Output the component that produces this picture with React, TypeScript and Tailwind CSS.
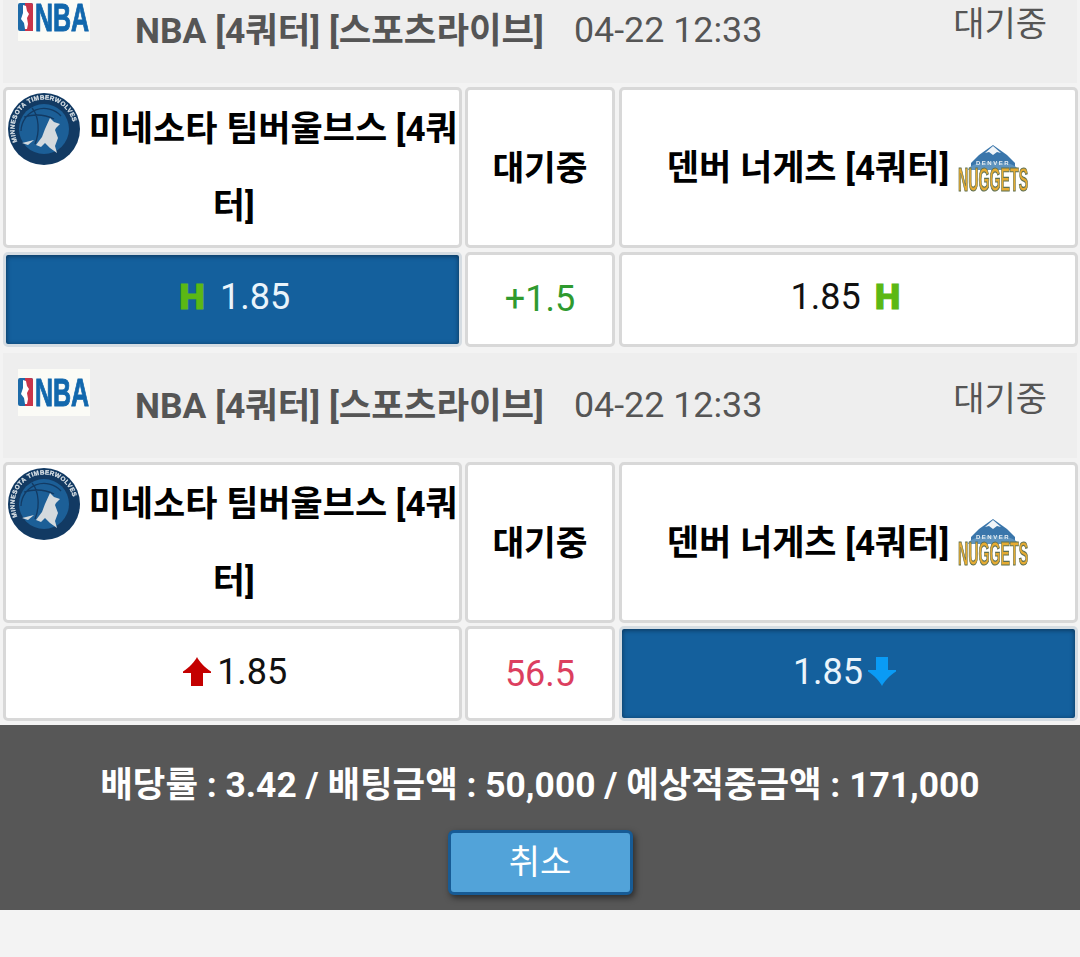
import React from 'react';

const FONT = "font-['Roboto','Noto_Sans_CJK_KR',sans-serif]";

function NbaLogo() {
  return (
    <svg width="72" height="47" viewBox="0 0 72 47" className="block blur-[0.5px]">
      <rect width="72" height="47" fill="#fbfbf6" />
      <rect x="0" y="9" width="15" height="28" rx="2" fill="#1d6aa8" />
      <path d="M7 9h6a2 2 0 0 1 2 2v26H7z" fill="#c9354a" />
      <path d="M5 11l3 1 1 5 2 3-2 4 1 6-1 5H7l-1-6-3-4 2-6z" fill="#fff" />
      <text transform="translate(17 37) scale(0.64 1)" fontFamily="Liberation Sans" fontWeight="700" fontSize="39" fill="#1268ad" stroke="#1268ad" strokeWidth="1">NBA</text>
    </svg>
  );
}

function WolvesLogo() {
  return (
    <svg width="72" height="72" viewBox="0 0 72 72" className="float-left -ml-px mr-[8px] mt-[2px] blur-[0.5px]">
      <defs>
        <path id="ring" d="M9.300 48.500A29.500 29.500 0 1 1 62.700 48.500" />
      </defs>
      <circle cx="36" cy="36" r="36" fill="#123a63" />
      <circle cx="36" cy="36" r="25" fill="#1c5f97" />
      <path d="M13 38a23 23 0 0 1 40-15M24 15c7 8 8 24 3 36M16 24c10-3 20-3 30 2" fill="none" stroke="#123a63" strokeWidth="1.300" />
      <text fontFamily="Liberation Sans" fontWeight="700" fontSize="6.300" fill="#dfe6ea" stroke="#dfe6ea" strokeWidth="0.200" letterSpacing="0.4">
        <textPath href="#ring">MINNESOTA TIMBERWOLVES</textPath>
      </text>
      <path d="M42 25L46 29L52 31L48 35L47 37L50 45L47 53L49 60L42 55L37 50L33 54L28 52L34 44L37 36z" fill="#d4dade" />
      <path d="M14 50L26 47L20 52z" fill="#d4dade" />
    </svg>
  );
}

function NuggetsLogo() {
  return (
    <svg width="72" height="50" viewBox="0 0 72 50" className="inline-block align-[-22px] ml-[8px] blur-[0.5px]">
      <path d="M36 1l14 10 8 8v6H14v-6l8-8z" fill="#3a76ab" />
      <path d="M36 2l8 7-4-1-4 3-4-3-4 1z" fill="#f1f5f8" />
      <path d="M11 26c2-11 48-11 50 0z" fill="#5f94be" />
      <text x="36" y="21" textAnchor="middle" fontFamily="Liberation Sans" fontWeight="700" fontSize="6" letterSpacing="1.500" fill="#e8eef3">DENVER</text>
      <text transform="translate(1 47) scale(0.43 1)" fontFamily="Liberation Sans" fontWeight="700" fontSize="33" fill="#e6ab32" stroke="#5f7050" strokeWidth="1.200">NUGGETS</text>
    </svg>
  );
}

function HomeMark() {
  return <span className="font-['DejaVu_Sans'] font-bold text-[33px] leading-none text-[#5bb814] [-webkit-text-stroke:1px_#5bb814]">H</span>;
}

function OddsCell({ selected, className, children }: { selected?: boolean; className?: string; children: React.ReactNode }) {
  return (
    <div className={`h-[95px] rounded-[5px] border-[3px] flex items-center justify-center text-[36px] pb-[4px] ${selected ? 'border-[#d5dce2] bg-[#14609d] text-[#eaf4fb] shadow-[inset_0_1px_5px_#0b3356]' : 'border-[#d8d8d8] bg-white text-[#111]'} ${className ?? ''}`}>
      {children}
    </div>
  );
}

function NameCell({ children, center, size }: { children: React.ReactNode; center?: boolean; size?: string }) {
  return (
    <div className={`h-[161px] rounded-[5px] border-[3px] border-[#d8d8d8] bg-white text-center font-bold leading-[77px] text-black ${size ?? 'text-[35px]'} ${center ? 'flex items-center justify-center px-[2px] pt-[2px]' : 'pl-[3px] pt-px'}`}>
      {children}
    </div>
  );
}

function Bet({ home, line, away }: { home: React.ReactNode; line: React.ReactNode; away: React.ReactNode }) {
  return (
    <div className="mb-[6px]">
      <div className="h-[105px] bg-[#eeeeee] flex items-start pl-[15px] pr-[30px] text-[#555]">
        <div className="mt-[16px]">
          <NbaLogo />
        </div>
        <div className="ml-[45px] mt-[24px] text-[35.400px] font-bold leading-[58px] whitespace-nowrap">NBA [4쿼터] [스포츠라이브]</div>
        <div className="ml-[30px] mt-[23px] text-[35.800px] leading-[58px] whitespace-nowrap">04-22 12:33</div>
        <div className="ml-auto mt-[16px] text-[34px] leading-[60px]">대기중</div>
      </div>
      <div className="grid grid-cols-[458.500px_150px_459px] gap-[3.500px] pt-[4px]">
        <NameCell>
          <WolvesLogo />
          미네소타 팀버울브스 [4쿼터]
        </NameCell>
        <NameCell center size="text-[34.500px]">대기중</NameCell>
        <NameCell center>
          <span>덴버 너게츠 [4쿼터]</span>
          <NuggetsLogo />
        </NameCell>
        {home}
        {line}
        {away}
      </div>
    </div>
  );
}

export default function App() {
  return (
    <div className={`${FONT} h-[957px] overflow-hidden bg-[#f3f3f3]`}>
      <div className="-mt-[22px] px-[3px]">
        <Bet
          home={
            <OddsCell selected className="pl-[4px]">
              <HomeMark />
              <span className="ml-[14px]">1.85</span>
            </OddsCell>
          }
          line={<OddsCell><span className="text-[#2f9a2f] pt-[4px]">+1.5</span></OddsCell>}
          away={
            <OddsCell className="pr-[4px]">
              <span>1.85</span>
              <span className="ml-[13px]"><HomeMark /></span>
            </OddsCell>
          }
        />
        <Bet
          home={
            <OddsCell className="pl-[6px]">
              <svg width="28" height="29" viewBox="0 0 28 29" className="mr-[6px]">
                <path d="M14 0C16 4 22 11 28 14.500V16H20V29H8V16H0V14.500C6 11 12 4 14 0z" fill="#c40000" />
              </svg>
              <span>1.85</span>
            </OddsCell>
          }
          line={<OddsCell><span className="text-[#dc3f5f] pt-[4px]">56.5</span></OddsCell>}
          away={
            <OddsCell selected className="pr-[7px]">
              <span>1.85</span>
              <svg width="28" height="29" viewBox="0 0 28 29" className="ml-[5px]">
                <path d="M8 0H20V13H28V14.500C22 18 16 25 14 29C12 25 6 18 0 14.500V13H8z" fill="#0a9bf5" />
              </svg>
            </OddsCell>
          }
        />
      </div>
      <div className="-mt-[2px] h-[185px] bg-[#575757] flex flex-col items-center pt-[34px]">
        <div className="text-[35.400px] font-bold leading-[52px] text-white whitespace-nowrap">배당률 : 3.42 / 배팅금액 : 50,000 / 예상적중금액 : 171,000</div>
        <button className="mt-[19px] w-[185px] h-[65px] rounded-[6px] border-[3px] border-[#175b95] bg-[#52a3d9] text-[34px] text-white shadow-[2px_3px_6px_rgba(0,0,0,0.5)]">취소</button>
      </div>
    </div>
  );
}
